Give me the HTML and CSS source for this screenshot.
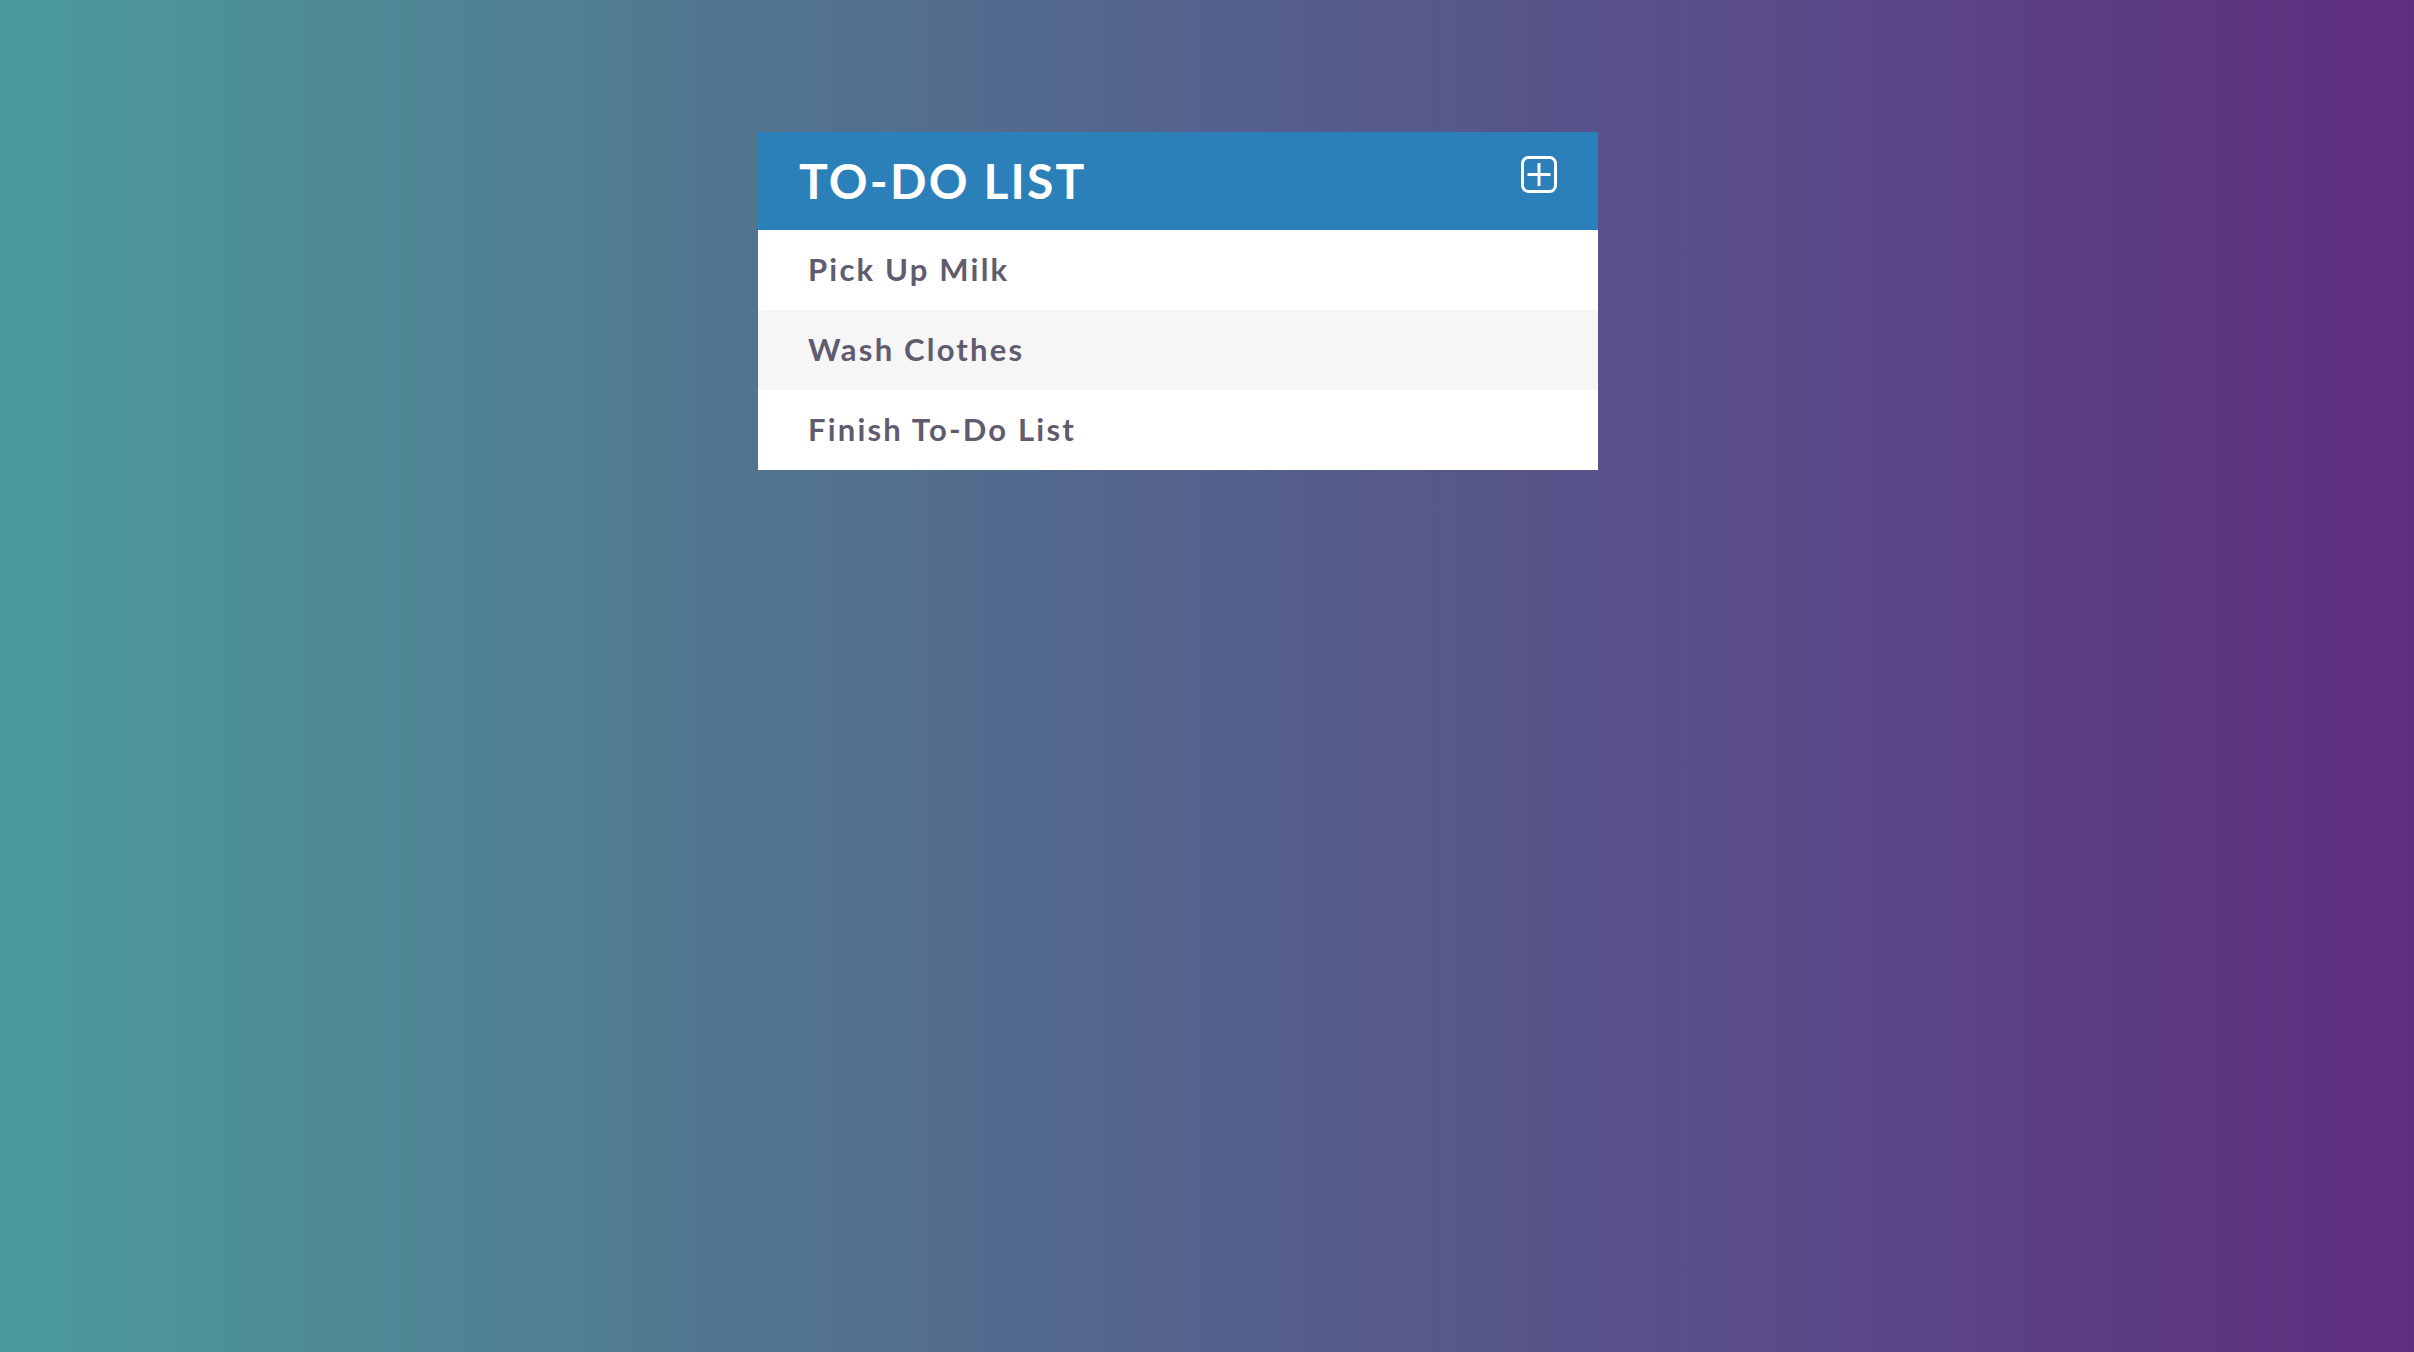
FILE: index.html
```html
<!DOCTYPE html>
<html>
<head>
<meta charset="utf-8">
<title>To-Do List</title>
<link rel="stylesheet" href="styles.css">
</head>
<body>
<div class="page">
  <div class="card">
    <div class="card-header">
      <h1 class="title">TO-DO LIST</h1>
      <svg class="add-icon" width="36" height="37" viewBox="0 0 36 37" aria-label="add">
        <rect x="1.5" y="1.5" width="33" height="34" rx="6" ry="6" fill="none" stroke="#ffffff" stroke-width="3"/>
        <line x1="18" y1="7" x2="18" y2="30" stroke="#ffffff" stroke-width="3"/>
        <line x1="6.5" y1="18.5" x2="29.5" y2="18.5" stroke="#ffffff" stroke-width="3"/>
      </svg>
    </div>
    <ul class="items">
      <li class="item">Pick Up Milk</li>
      <li class="item">Wash Clothes</li>
      <li class="item">Finish To-Do List</li>
    </ul>
  </div>
</div>
</body>
</html>
```

FILE: styles.css
```css
html, body {
  margin: 0;
  padding: 0;
  height: 100%;
}
body {
  background: linear-gradient(to right, #4b9b9b 0%, #51768f 30%, #555c8c 55%, #5a4a88 75%, #5e2d7e 100%);
  font-family: "Lato", "Open Sans", sans-serif;
}
.page {
  min-height: 100vh;
  padding-top: 132px;
  padding-left: 758px;
  box-sizing: border-box;
}
.card {
  width: 840px;
}
.card-header {
  height: 98px;
  background: #2b80b9;
  display: flex;
  align-items: center;
  justify-content: space-between;
  padding: 0 41px 0 41px;
  box-sizing: border-box;
}
.title {
  margin: 0;
  color: #ffffff;
  font-size: 48px;
  font-weight: 700;
  letter-spacing: 2.2px;
  line-height: 1;
}
.add-icon {
  display: block;
  margin-top: -13px;
}
.items {
  list-style: none;
  margin: 0;
  padding: 0;
}
.item {
  height: 80px;
  display: flex;
  align-items: center;
  padding-left: 50px;
  padding-bottom: 2px;
  box-sizing: border-box;
  background: #ffffff;
  color: #5f5c70;
  font-size: 31px;
  font-weight: 700;
  letter-spacing: 2.2px;
}
.item:nth-child(even) {
  background: #f6f6f6;
}
```
